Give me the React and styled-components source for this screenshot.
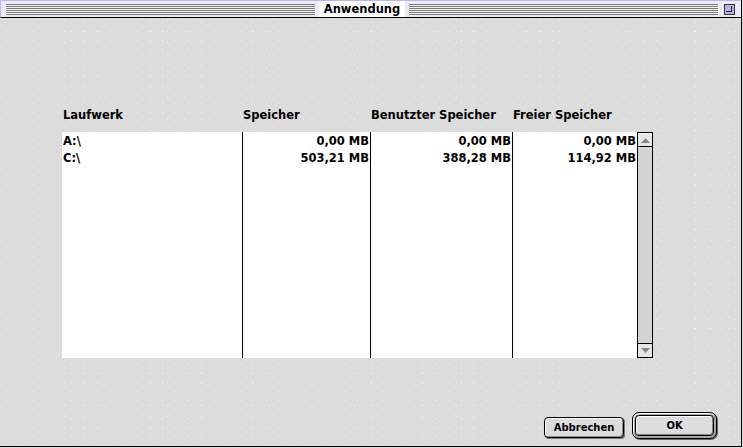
import React from "react";
import styled, { createGlobalStyle } from "styled-components";

const Global = createGlobalStyle`
  html, body { margin: 0; padding: 0; background: #dddddd; }
  body { width: 743px; height: 448px; overflow: hidden; font-family: "DejaVu Sans", "Liberation Sans", sans-serif; }
`;

const Window = styled.div`
  width: 742px;
  height: 447px;
  box-sizing: border-box;
  border-right: 1px solid #000;
  border-bottom: 1px solid #000;
  background-color: #dcdcdc;
  background-image:
    radial-gradient(circle, #f2f2f2 0.7px, transparent 1px),
    radial-gradient(circle, #eeeeee 0.7px, transparent 1px);
  background-size: 13px 9px, 17px 11px;
  background-position: 0 0, 6px 4px;
  display: flex;
  flex-direction: column;
`;

const TitleBar = styled.div`
  height: 18px;
  box-sizing: border-box;
  border-top: 1px solid #b8b8f0;
  border-left: 1px solid #b8b8f0;
  border-bottom: 1px solid #000;
  background: #ececf8;
  display: flex;
  align-items: center;
  padding: 0 6px 0 5px;
  gap: 4px;
`;

const Stripes = styled.div`
  flex: 1;
  height: 11px;
  background: repeating-linear-gradient(
    to bottom,
    #7a7a7a 0px,
    #7a7a7a 1px,
    #f4f4f4 1px,
    #f4f4f4 2px
  );
`;

const Title = styled.div`
  font-family: "DejaVu Sans", sans-serif;
  font-size: 11.5px;
  font-weight: bold;
  color: #000;
  background: #fff;
  padding: 0 5px;
  line-height: 16px;
`;

const ZoomBox = styled.div`
  width: 11px;
  height: 11px;
  box-sizing: border-box;
  border: 1px solid #333;
  background: #b4b4e8;
  position: relative;
  margin-left: 2px;
  &::after {
    content: "";
    position: absolute;
    left: 1px;
    top: 1px;
    width: 5px;
    height: 5px;
    border-right: 1px solid #222;
    border-bottom: 1px solid #222;
  }
`;

const Body = styled.div`
  flex: 1;
  display: flex;
  flex-direction: column;
  padding: 90px 24px 7px 62px;
`;

const HeaderRow = styled.div`
  display: grid;
  grid-template-columns: 180px 128px 142px 125px;
  height: 24px;
  font-size: 11.5px;
  font-weight: bold;
  color: #000;
`;

const HeaderCell = styled.div`
  padding-left: 1px;
  line-height: 14px;
  white-space: nowrap;
`;

const ListArea = styled.div`
  display: flex;
  width: 591px;
  height: 226px;
`;

const List = styled.div`
  flex: 1;
  background: #fff;
  display: grid;
  grid-template-columns: 180px 128px 142px 125px;
`;

const Column = styled.div`
  border-left: ${(p) => (p.$first ? "none" : "1px solid #000")};
  padding-top: 1px;
  font-size: 11.5px;
  font-weight: bold;
  color: #000;
  text-align: ${(p) => (p.$right ? "right" : "left")};
  padding-left: ${(p) => (p.$right ? "0" : "1px")};
  padding-right: ${(p) => (p.$right ? "1px" : "0")};
`;

const Cell = styled.div`
  height: 17px;
  line-height: 17px;
  white-space: nowrap;
`;

const ScrollBar = styled.div`
  width: 16px;
  box-sizing: border-box;
  border: 1px solid #000;
  background: #d4d4d4;
  display: flex;
  flex-direction: column;
  justify-content: space-between;
`;

const Arrow = styled.div`
  height: 14px;
  box-sizing: border-box;
  background: #e6e6e6;
  border-top: ${(p) => (p.$down ? "1px solid #000" : "1px solid #fff")};
  border-bottom: ${(p) => (p.$down ? "none" : "1px solid #000")};
  display: flex;
  align-items: center;
  justify-content: center;
`;

const Spacer = styled.div`
  flex: 1;
`;

const ButtonRow = styled.div`
  display: flex;
  justify-content: flex-end;
  align-items: center;
  gap: 8px;
`;

const Button = styled.button`
  width: 80px;
  height: 21px;
  box-sizing: border-box;
  border: 1px solid #000;
  border-radius: 4px;
  background: #dddddd;
  box-shadow: inset 1px 1px 0 #fff, inset -1px -1px 0 #888, 1px 1px 0 #777;
  font-family: "DejaVu Sans", sans-serif;
  font-size: 10px;
  font-weight: bold;
  color: #000;
  padding: 0;
  margin-top: 3px;
`;

const DefaultRing = styled.div`
  width: 85px;
  height: 27px;
  box-sizing: border-box;
  border: 1px solid #000;
  border-radius: 7px;
  background: #a8a8a8;
  padding: 2px;
  box-shadow: inset 1px 1px 0 #fff, 1px 1px 0 #666;
  display: flex;
`;

const DefaultButton = styled(Button)`
  width: 100%;
  height: 100%;
  margin: 0;
  border-radius: 4px;
  box-shadow: inset 1px 1px 0 #fff, inset -1px -1px 0 #888;
`;

const drives = [
  { name: "A:\\", total: "0,00 MB", used: "0,00 MB", free: "0,00 MB" },
  { name: "C:\\", total: "503,21 MB", used: "388,28 MB", free: "114,92 MB" },
];

export default function App() {
  return (
    <>
      <Global />
      <Window>
        <TitleBar>
          <Stripes />
          <Title>Anwendung</Title>
          <Stripes />
          <ZoomBox />
        </TitleBar>
        <Body>
          <HeaderRow>
            <HeaderCell>Laufwerk</HeaderCell>
            <HeaderCell>Speicher</HeaderCell>
            <HeaderCell>Benutzter Speicher</HeaderCell>
            <HeaderCell>Freier Speicher</HeaderCell>
          </HeaderRow>
          <ListArea>
            <List>
              <Column $first>
                {drives.map((d) => (
                  <Cell key={d.name}>{d.name}</Cell>
                ))}
              </Column>
              <Column $right>
                {drives.map((d) => (
                  <Cell key={d.name}>{d.total}</Cell>
                ))}
              </Column>
              <Column $right>
                {drives.map((d) => (
                  <Cell key={d.name}>{d.used}</Cell>
                ))}
              </Column>
              <Column $right>
                {drives.map((d) => (
                  <Cell key={d.name}>{d.free}</Cell>
                ))}
              </Column>
            </List>
            <ScrollBar>
              <Arrow>
                <svg width="9" height="5" viewBox="0 0 9 5">
                  <path d="M0 5 L4.5 0 L9 5 Z" fill="#888" />
                </svg>
              </Arrow>
              <Arrow $down>
                <svg width="9" height="5" viewBox="0 0 9 5">
                  <path d="M0 0 L4.5 5 L9 0 Z" fill="#888" />
                </svg>
              </Arrow>
            </ScrollBar>
          </ListArea>
          <Spacer />
          <ButtonRow>
            <Button>Abbrechen</Button>
            <DefaultRing>
              <DefaultButton>OK</DefaultButton>
            </DefaultRing>
          </ButtonRow>
        </Body>
      </Window>
    </>
  );
}
